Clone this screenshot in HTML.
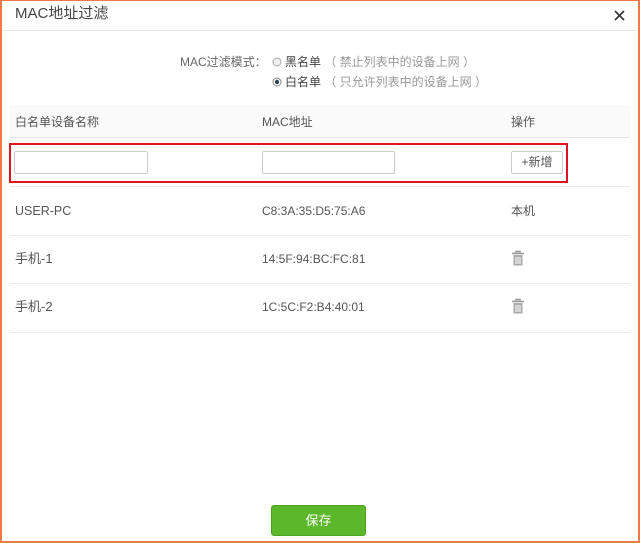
<!DOCTYPE html>
<html><head><meta charset="utf-8"><style>
*{margin:0;padding:0;box-sizing:border-box}
body{width:640px;height:543px;overflow:hidden;background:#fff;font-family:"Liberation Sans","Noto Sans CJK SC",sans-serif;color:#555;font-size:12px;position:relative}
.frame{position:absolute;left:0;top:0;width:640px;height:543px;border:2px solid #ee7a45;border-top:1px solid #ee7a45}
.a{position:absolute;white-space:nowrap;line-height:16px}
.line{position:absolute;left:10px;width:620px;height:1px;background:#ececec}
.inp{position:absolute;height:23px;border:1px solid #ccc;border-radius:2px;background:#fff}
</style></head><body>
<div class="frame"></div>
<div class="a" style="left:15px;top:5px;font-size:15px;line-height:18px;color:#444">MAC地址过滤</div>
<svg class="a" style="left:614px;top:10px" width="11" height="11"><path d="M1 1L10 10M10 1L1 10" stroke="#333" stroke-width="1.6"/></svg>
<div style="position:absolute;left:2px;top:30px;width:636px;height:1px;background:#e6e6e6"></div>
<div class="a" style="left:180px;top:54px;color:#666">MAC过滤模式：</div>
<svg class="a" style="left:272px;top:57px" width="10" height="10"><circle cx="5" cy="5" r="4" fill="#eee" stroke="#aaa"/></svg>
<div class="a" style="left:285px;top:54px;color:#444">黑名单 <span style="color:#999">（ 禁止列表中的设备上网 ）</span></div>
<svg class="a" style="left:272px;top:77px" width="10" height="10"><circle cx="5" cy="5" r="4" fill="#fff" stroke="#888"/><circle cx="5" cy="5" r="2.2" fill="#345"/></svg>
<div class="a" style="left:285px;top:74px;color:#444">白名单 <span style="color:#999">（ 只允许列表中的设备上网 ）</span></div>
<div style="position:absolute;left:10px;top:105px;width:620px;height:33px;background:#fafafa;border-bottom:1px solid #e6e6e6"></div>
<div class="a" style="left:15px;top:114px">白名单设备名称</div>
<div class="a" style="left:262px;top:114px">MAC地址</div>
<div class="a" style="left:511px;top:114px">操作</div>
<div style="position:absolute;left:9px;top:143px;width:559px;height:40px;border:2px solid #e0141e"></div>
<div class="inp" style="left:14px;top:151px;width:134px"></div>
<div class="inp" style="left:262px;top:151px;width:133px"></div>
<div class="inp" style="left:511px;top:151px;width:52px;text-align:center;line-height:21px;color:#555">+新增</div>
<div class="line" style="top:186px"></div>
<div class="line" style="top:235px"></div>
<div class="line" style="top:283px"></div>
<div class="line" style="top:332px"></div>
<div class="a" style="left:15px;top:203px;font-size:12.5px">USER-PC</div>
<div class="a" style="left:262px;top:203px;font-size:12px">C8:3A:35:D5:75:A6</div>
<div class="a" style="left:511px;top:203px">本机</div>
<div class="a" style="left:15px;top:251px;font-size:13px">手机-1</div>
<div class="a" style="left:262px;top:251px;font-size:12px">14:5F:94:BC:FC:81</div>
<div class="a" style="left:15px;top:299px;font-size:13px">手机-2</div>
<div class="a" style="left:262px;top:299px;font-size:12px">1C:5C:F2:B4:40:01</div>
<svg class="a" style="left:511px;top:250px" width="14" height="17"><path d="M1 3.5H13M5 3.5V1.5H9V3.5" stroke="#999" stroke-width="1.4" fill="none"/><path d="M2.5 5H11.5V15.5H2.5Z" fill="#aaa"/><path d="M5 7V14M7 7V14M9 7V14" stroke="#fff" stroke-width="1"/></svg>
<svg class="a" style="left:511px;top:298px" width="14" height="17"><path d="M1 3.5H13M5 3.5V1.5H9V3.5" stroke="#999" stroke-width="1.4" fill="none"/><path d="M2.5 5H11.5V15.5H2.5Z" fill="#aaa"/><path d="M5 7V14M7 7V14M9 7V14" stroke="#fff" stroke-width="1"/></svg>
<div class="a" style="left:271px;top:505px;width:95px;height:31px;background:#5cb82a;border:1px solid #4ea321;border-radius:3px;color:#fff;text-align:center;line-height:29px;font-size:13px">保存</div>
</body></html>
